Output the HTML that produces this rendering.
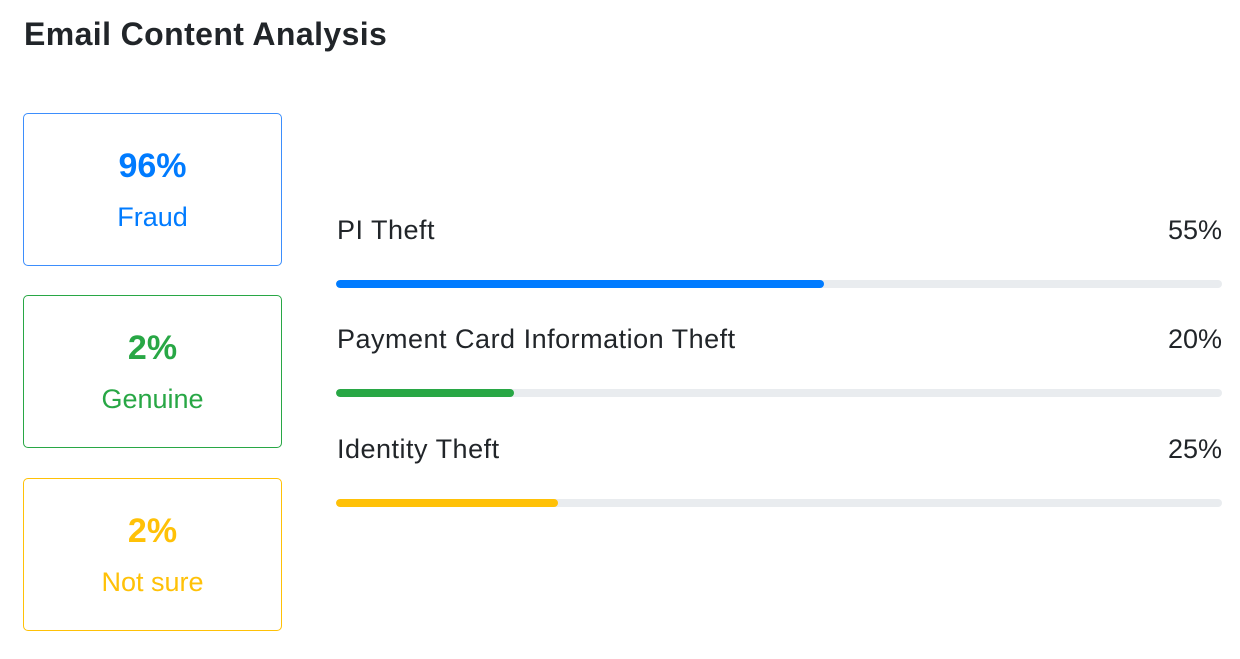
<!DOCTYPE html>
<html><head><style>
body{margin:0;width:1240px;height:659px;background:#fff;font-family:"Liberation Sans",sans-serif;color:#212529;position:relative;overflow:hidden}
h1{position:absolute;left:24px;top:16px;margin:0;font-size:32px;font-weight:bold;letter-spacing:0.4px}
.box{position:absolute;left:23px;width:257px;height:151px;border-width:1px;border-style:solid;border-radius:5px;text-align:center}
.box .n{position:absolute;top:33px;width:100%;font-size:34px;font-weight:bold}
.box .l{position:absolute;top:88px;width:100%;font-size:27px}
.lbl{position:absolute;left:337px;font-size:27px;letter-spacing:0.5px}
.pct{position:absolute;right:18px;font-size:27px}
.bar{position:absolute;left:336px;width:886px;height:8px;border-radius:4px;background:#e9ecef;overflow:hidden}
.bar div{height:100%;border-radius:4px}
</style></head><body>
<h1>Email Content Analysis</h1>
<div class="box" style="top:113px;border-color:#3d8efc;color:#007bff"><div class="n">96%</div><div class="l">Fraud</div></div>
<div class="box" style="top:295px;border-color:#28a745;color:#28a745"><div class="n">2%</div><div class="l">Genuine</div></div>
<div class="box" style="top:478px;border-color:#ffc107;color:#ffc107"><div class="n">2%</div><div class="l">Not sure</div></div>
<div class="lbl" style="top:215px">PI Theft</div><div class="pct" style="top:215px">55%</div>
<div class="bar" style="top:280px"><div style="width:488px;background:#007bff"></div></div>
<div class="lbl" style="top:324px">Payment Card Information Theft</div><div class="pct" style="top:324px">20%</div>
<div class="bar" style="top:389px"><div style="width:178px;background:#28a745"></div></div>
<div class="lbl" style="top:434px">Identity Theft</div><div class="pct" style="top:434px">25%</div>
<div class="bar" style="top:499px"><div style="width:222px;background:#ffc107"></div></div>
</body></html>
